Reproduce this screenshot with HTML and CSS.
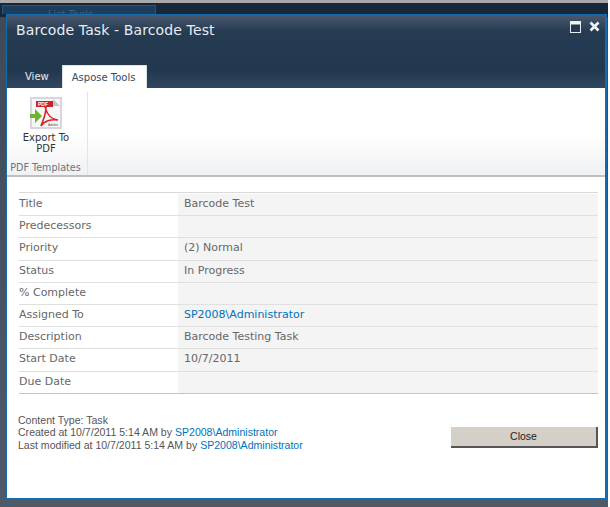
FILE: index.html
```html
<!DOCTYPE html>
<html lang="en">
<head>
  <meta charset="UTF-8">
  <title>Barcode Task - Barcode Test</title>
  <link rel="stylesheet" href="styles.css">
</head>
<body>
  <div class="screen">
    <div class="backdrop-top">
      <div class="back-tab"><span>List Tools</span></div>
    </div>
    <div class="dialog">
      <div class="titlebar">
        <div class="title-row">
          <h1>Barcode Task - Barcode Test</h1>
          <div class="win-icons">
            <svg width="11" height="12" viewBox="0 0 11 12"><rect x="0.5" y="0.5" width="10" height="11" fill="#26384d" stroke="#e8ecf0"/><rect x="1" y="1" width="9" height="2.5" fill="#f2f4f6"/></svg>
            <svg width="11" height="11" viewBox="0 0 11 11"><path d="M1.5 1.5L9.5 9.5M9.5 1.5L1.5 9.5" stroke="#f2f4f6" stroke-width="2.6"/></svg>
          </div>
        </div>
        <div class="tabs">
          <span class="tab">View</span>
          <span class="tab tab-active">Aspose Tools</span>
        </div>
      </div>
      <div class="ribbon">
        <div class="group">
          <div class="group-body">
            <svg class="pdf-icon" width="32" height="32" viewBox="0 0 32 32">
              <rect width="32" height="32" fill="#d9d3e2"/>
              <rect x="2" y="2" width="28" height="28" fill="#f7f7f7"/>
              <path d="M23 2L30 9H23Z" fill="#c4c4c4"/>
              <rect x="6" y="4" width="17" height="6" fill="#c8232c"/>
              <text x="8" y="9" class="pdf-tag">PDF</text>
              <path d="M15 10C17 17 20 22 28 23C21 22 14 24 11 29C13 23 16 18 16 10" fill="none" stroke="#d8262c" stroke-width="1.6"/>
              <text x="18" y="29" class="adobe-tag">Adobe</text>
              <path d="M0 17H5V12L12 19L5 26V21H0Z" fill="#6cb52d"/>
            </svg>
            <div class="btn-label">Export To<br>PDF</div>
          </div>
          <div class="group-name">PDF Templates</div>
        </div>
      </div>
      <div class="content">
        <div class="fields">
          <div class="row"><div class="label">Title</div><div class="value">Barcode Test</div></div>
          <div class="row"><div class="label">Predecessors</div><div class="value"></div></div>
          <div class="row"><div class="label">Priority</div><div class="value">(2) Normal</div></div>
          <div class="row"><div class="label">Status</div><div class="value">In Progress</div></div>
          <div class="row"><div class="label">% Complete</div><div class="value"></div></div>
          <div class="row"><div class="label">Assigned To</div><div class="value"><a href="#">SP2008\Administrator</a></div></div>
          <div class="row"><div class="label">Description</div><div class="value">Barcode Testing Task</div></div>
          <div class="row"><div class="label">Start Date</div><div class="value">10/7/2011</div></div>
          <div class="row"><div class="label">Due Date</div><div class="value"></div></div>
        </div>
        <div class="footer">
          <div class="meta">
            Content Type: Task<br>
            Created at 10/7/2011 5:14 AM by <a href="#">SP2008\Administrator</a><br>
            Last modified at 10/7/2011 5:14 AM by <a href="#">SP2008\Administrator</a>
          </div>
          <button class="close-btn" type="button">Close</button>
        </div>
      </div>
    </div>
  </div>
</body>
</html>
```

FILE: styles.css
```css
html, body { margin: 0; padding: 0; background: #fff; }
body { font-family: "DejaVu Sans", Verdana, sans-serif; color: #676767; }
a { color: #0072bc; text-decoration: none; }

.screen { width: 608px; height: 507px; box-sizing: border-box; border-top: 3px solid #a9a9a9; padding: 0 1px 0 2px; background: linear-gradient(#17283a 0, #17283a 14px, #3f4a59 14px, #4f5a68 100%); overflow: hidden; }
.backdrop-top { height: 11px; overflow: hidden; }
.back-tab { width: 154px; height: 11px; margin-top: 2px; padding-left: 45px; background: #1d3d5c; border: 1px solid #24577f; border-bottom: none; box-sizing: border-box; font-size: 10px; color: #38617f; line-height: 17px; }

.dialog { margin-left: 4px; height: 486px; box-sizing: border-box; border: 1px solid #156bac; border-width: 1px 2px 2px 1px; background: #fff; }

.titlebar { height: 73px; background: linear-gradient(#4a586e 0, #263c53 16px, #22384f 55px, #30475f 100%); display: flex; flex-direction: column; justify-content: space-between; }
.title-row { display: flex; justify-content: space-between; padding: 6px 5px 0 9px; }
h1 { margin: 0; font-size: 14px; font-weight: normal; color: #e9edf1; line-height: 18px; letter-spacing: 0.12px; }
.win-icons { display: flex; gap: 8px; }

.tabs { display: flex; padding-left: 6px; align-items: flex-end; }
.tab { font-size: 10px; color: #e6eaee; padding: 0 12px; line-height: 22px; height: 22px; }
.tab-active { background: #fff; color: #3b4a59; border: 1px solid #dfe3e8; border-bottom: none; border-radius: 1px 1px 0 0; line-height: 23px; margin-left: 1px; padding: 0 11px 0 9px; }

.ribbon { height: 89px; box-sizing: border-box; background: linear-gradient(#fff 0, #fff 45px, #f0f1f3 100%); border-bottom: 2px solid #bdbfc2; display: flex; padding-top: 4px; }
.group { width: 81px; box-sizing: border-box; padding-right: 2px; border-right: 1px solid #e3e4e6; display: flex; flex-direction: column; align-items: center; }
.group-body { flex: 1; display: flex; flex-direction: column; align-items: center; padding-top: 5px; }
.pdf-icon { display: block; }
.pdf-tag { font: bold 5px "Liberation Sans", sans-serif; fill: #fff; }
.adobe-tag { font: 3.5px "Liberation Sans", sans-serif; fill: #555; }
.btn-label { font-size: 10px; line-height: 11px; color: #333; text-align: center; margin-top: 3px; }
.group-name { font-size: 9.6px; line-height: 14px; color: #6b7480; white-space: nowrap; margin-left: -1px; }

.content { padding: 15px 7px 0 12px; }
.fields { border-top: 1px solid #d9d9d9; border-bottom: 1px solid #c4c4c4; }
.row { display: flex; height: 22.2px; box-sizing: border-box; font-size: 11px; line-height: 20px; border-top: 1px solid #e0e0e0; }
.row:first-child { border-top-color: transparent; }
.label { width: 159px; box-sizing: border-box; }
.value { flex: 1; background: #f4f4f4; padding-left: 6px; }

.footer { display: flex; justify-content: space-between; align-items: flex-start; padding-top: 20px; }
.meta { font-family: "Liberation Sans", sans-serif; font-size: 10.55px; line-height: 12.5px; color: #555; margin-left: -1px; }
.close-btn { width: 147px; height: 21px; margin-top: 13px; padding: 0; background: #d4d0c8; border: none; border-right: 2px solid #555; border-bottom: 2px solid #555; font-family: "Liberation Sans", sans-serif; font-size: 10.5px; color: #222; }
```
